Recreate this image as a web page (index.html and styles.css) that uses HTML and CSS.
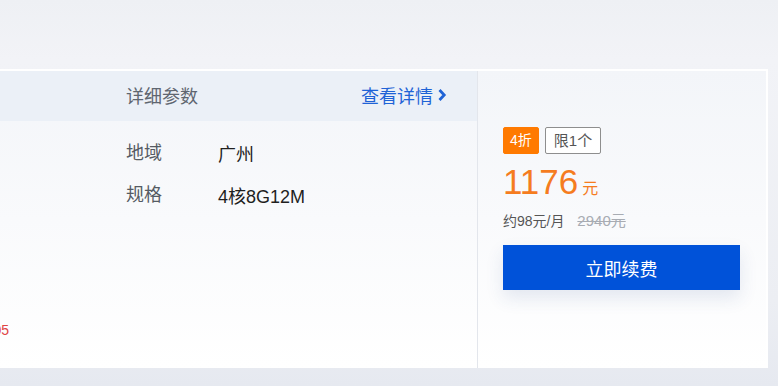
FILE: index.html
```html
<!DOCTYPE html>
<html lang="zh-CN">
<head>
  <meta charset="UTF-8">
  <meta name="viewport" content="width=device-width, initial-scale=1.0">
  <title>续费</title>
  <link rel="stylesheet" href="styles.css">
</head>
<body>

  <!-- Renewal card -->
  <div class="renew-card">
    <div class="main">
      <div class="main-head">
        <div class="col-info"></div>
        <div class="col-spec">
          <span class="head-title">详细参数</span>
          <a href="#" class="more">查看详情
            <svg width="10" height="14" viewBox="0 0 10 14"><path d="M2.5 2 L7.2 7 L2.5 12" fill="none" stroke="#1f63d6" stroke-width="2.8"/></svg>
          </a>
        </div>
      </div>
      <div class="main-body">
        <div class="col-info">
          <div class="expire">到期时间 2025-06-05</div>
        </div>
        <div class="col-spec">
          <div class="spec-row"><span class="spec-label">地域</span><span class="spec-value">广州</span></div>
          <div class="spec-row"><span class="spec-label">规格</span><span class="spec-value">4核8G12M</span></div>
        </div>
      </div>
    </div>

    <div class="side">
      <div class="tags">
        <span class="tag tag-off">4折</span>
        <span class="tag tag-limit">限1个</span>
      </div>
      <div class="price"><span class="price-num">1176</span><span class="price-unit">元</span></div>
      <div class="price-sub">约98元/月 <s class="price-old">2940元</s></div>
      <button class="buy">立即续费</button>
    </div>
  </div>

</body>
</html>
```

FILE: styles.css
```css
body {
  margin: 0;
  height: 386px;
  overflow: hidden;
  font-family: "Liberation Sans", "Noto Sans CJK SC", sans-serif;
  background: linear-gradient(to bottom, #eef0f4, #f2f3f7 60px, #eceef3 300px, #e6e9f0);
  padding-top: 69px;
  box-sizing: border-box;
}

.renew-card {
  display: flex;
  margin-left: -299px;
  width: 1067px;
  height: 299px;
  box-sizing: border-box;
  border-top: 2px solid #fff;
  border-right: 2px solid #fff;
  background: linear-gradient(to bottom, #f3f5f9, #ffffff);
}

.main {
  width: 777px;
  border-right: 1px solid #e3e6ec;
  display: flex;
  flex-direction: column;
}

.main-head {
  display: flex;
  height: 50px;
  align-items: center;
  background: #ebf0f7;
  font-size: 18px;
}

.col-info {
  width: 425px;
}

.col-spec {
  flex: 1;
  padding-right: 30px;
}

.main-head .col-spec {
  display: flex;
  justify-content: space-between;
  align-items: center;
  position: relative;
  top: -1px;
}

.head-title {
  color: #5f6670;
}

.more {
  color: #1f63d6;
  text-decoration: none;
  display: flex;
  align-items: center;
  gap: 4px;
}

.main-body {
  flex: 1;
  display: flex;
}

.main-body .col-info {
  display: flex;
  align-items: flex-end;
  padding-bottom: 29px;
}

.expire {
  width: 308px;
  text-align: right;
  color: #e04444;
  font-size: 14px;
}

.main-body .col-spec {
  padding-top: 11px;
}

.spec-row {
  display: flex;
  align-items: center;
  height: 42px;
  font-size: 18px;
}

.spec-label {
  width: 92px;
  color: #555b63;
  position: relative;
  top: -2px;
}

.spec-value {
  color: #1f1f1f;
}

.side {
  flex: 1;
  padding: 56px 26px 0 25px;
}

.tags {
  display: flex;
  gap: 6px;
}

.tag {
  height: 27px;
  line-height: 25px;
  box-sizing: border-box;
  padding: 0 6px;
  font-size: 14px;
  border-radius: 2px;
}

.tag-off {
  background: #ff7a00;
  color: #fff;
  border: 1px solid #ff7a00;
}

.tag-limit {
  border: 1px solid #8e8e8e;
  color: #555;
  background: #fff;
  padding: 0 8px;
  font-size: 15px;
}

.price {
  margin-top: 9px;
  color: #f57c1f;
  line-height: 38px;
}

.price-num {
  font-size: 35px;
}

.price-unit {
  font-size: 16px;
  margin-left: 4px;
}

.price-sub {
  margin-top: 1px;
  font-size: 14px;
  color: #555;
}

.price-old {
  margin-left: 9px;
  color: #a8acb3;
  font-size: 15px;
}

.buy {
  margin-top: 15px;
  width: 237px;
  height: 45px;
  border: none;
  background: #0052d9;
  color: #fff;
  font-family: inherit;
  font-size: 18px;
  box-shadow: 0 8px 18px rgba(40, 70, 140, 0.12);
  cursor: pointer;
}
```
